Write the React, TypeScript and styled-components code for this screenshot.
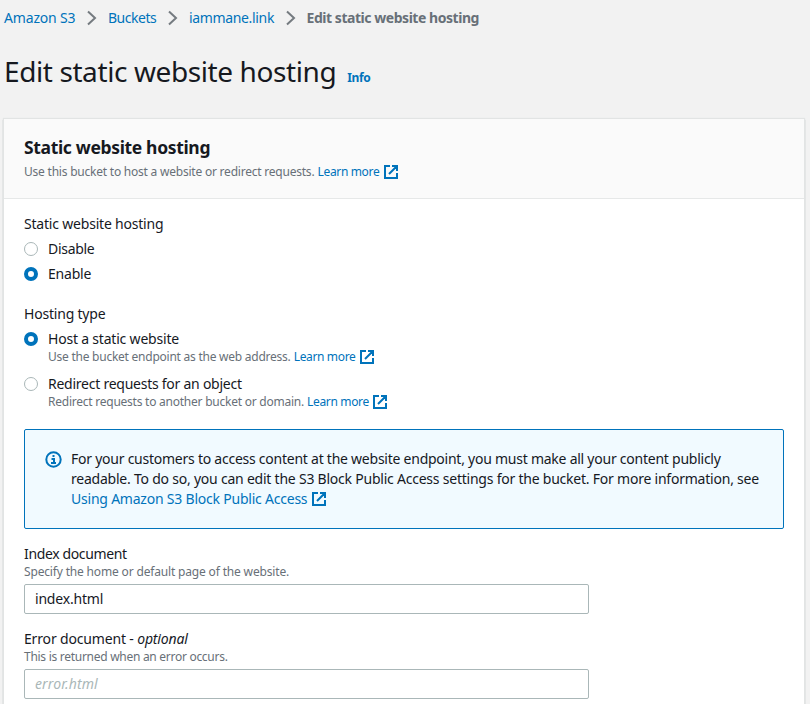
import React from "react";
import styled, { createGlobalStyle } from "styled-components";

const Global = createGlobalStyle`
  * { box-sizing: border-box; }
  html, body { margin: 0; background: #f2f2f2; }
  body { font: 14px/20px "Noto Sans", sans-serif; color: #16191f; overflow: hidden; }
`;
const Page = styled.main`
  width: 810px;
  height: 704px;
  overflow: hidden;
  padding: 8px 6px 0 4px;
`;
const Crumbs = styled.nav`display: flex; align-items: center; height: 20px; white-space: nowrap;`;
const Chevron = styled.svg`width: 10px; height: 16px; margin: 0 10.5px 0 12px; flex: none;`;
const Text = styled.span<{ $track?: number }>`
  letter-spacing: ${p => p.$track ?? -0.2}px;
  white-space: nowrap;
`;
const Link = styled.a<{ $track?: number }>`
  color: #0073bb;
  text-decoration: none;
  letter-spacing: ${p => p.$track ?? -0.2}px;
  white-space: nowrap;
`;
const Current = styled(Text)`color: #687078; font-weight: 700;`;
const Heading = styled.header`
  display: flex;
  align-items: baseline;
  gap: 11px;
  height: 36px;
  margin: 25px 0 30px;
`;
const Title = styled.h1`
  margin: 0;
  font-size: 28px;
  line-height: 36px;
  font-weight: 400;
  letter-spacing: -0.4px;
`;
const Info = styled(Link)`font-size: 12px; font-weight: 700;`;
const Card = styled.section`
  height: 640px;
  background: #fff;
  box-shadow: 0 0 1px 1px #e2e4e4, 1px 1px 1px 0 rgba(0, 28, 36, 0.3), -1px 1px 1px 0 rgba(0, 28, 36, 0.3);
`;
const CardHeader = styled.header`
  height: 80px;
  padding: 17px 20px 0;
  background: #fafafa;
  border-bottom: 1px solid #e6e8e8;
`;
const CardTitle = styled.h2`
  margin: 0;
  font-size: 17.5px;
  line-height: 22px;
  font-weight: 700;
  letter-spacing: -0.34px;
`;
const Hint = styled.div`
  display: flex;
  align-items: center;
  height: 16px;
  font-size: 12px;
  line-height: 16px;
  color: #687078;
  white-space: nowrap;
`;
const HeaderHint = styled(Hint)`margin-top: 6px;`;
const CardBody = styled.div`padding: 15px 20px 0;`;
const Label = styled.div`height: 20px; white-space: nowrap;`;
const Group = styled.div<{ $gap: number }>`margin-bottom: ${p => p.$gap}px;`;
const Choice = styled.div`
  display: grid;
  grid-template-columns: 14px 1fr;
  column-gap: 10px;
  align-items: center;
  margin-top: 5px;
  ${Hint} { grid-column: 2; }
`;
const DescribedChoice = styled(Choice)`grid-template-rows: 20px 16px; padding-bottom: 4px;`;
const Radio = styled.span<{ $on?: boolean }>`
  width: 14px;
  height: 14px;
  border-radius: 50%;
  background: #fff;
  border: ${p => (p.$on ? "4px solid #0073bb" : "1px solid #aab7b8")};
`;
const Alert = styled.div`
  display: flex;
  gap: 9px;
  height: 100px;
  margin-bottom: 15px;
  padding: 19px 20px;
  border: 1px solid #0073bb;
  border-radius: 2px;
  background: #f1faff;
`;
const InfoMark = styled.svg`width: 17px; height: 17px; margin-top: 1.5px; flex: none;`;
const AlertText = styled.div`display: flex; flex-direction: column;`;
const Line = styled.div`display: flex; align-items: center; height: 20px;`;
const Outer = styled.svg`width: 14px; height: 14px; margin-left: 5px; flex: none;`;
const LearnLink = styled(Link)`margin: 0 -0.7px 0 3.2px;`;
const Field = styled.label`display: block; width: 565px; margin-bottom: 15px;`;
const Input = styled.input<{ $track: number }>`
  display: block;
  width: 100%;
  height: 30px;
  margin-top: 4px;
  padding: 0 10px 2px;
  font: inherit;
  letter-spacing: ${p => p.$track}px;
  color: #16191f;
  background: #fff;
  border: 1px solid #aab7b8;
  border-radius: 2px;
  outline: none;
  &::placeholder { color: #aab7b8; font-style: italic; opacity: 1; }
`;

const Separator = () => (
  <Chevron viewBox="0 0 10 16" fill="none" stroke="#757b80" strokeWidth="2"><path d="M1 1.5 8 8 1 14.5" /></Chevron>
);
const External = () => (
  <Outer viewBox="0 0 14 14" fill="none" stroke="#0073bb" strokeWidth="2">
    <path d="M6 1H1V13H13V8M8 1H13V6M13 1 5 9" />
  </Outer>
);
const LearnMore = () => (
  <><LearnLink $track={-0.35}>Learn more</LearnLink><External /></>
);

export default function App() {
  return (
    <>
      <Global />
      <Page>
        <Crumbs>
          <Link $track={-0.17}>Amazon S3</Link><Separator />
          <Link $track={-0.45}>Buckets</Link><Separator />
          <Link $track={-0.33}>iammane.link</Link><Separator />
          <Current $track={-0.46}>Edit static website hosting</Current>
        </Crumbs>
        <Heading><Title>Edit static website hosting</Title><Info $track={-0.4}>Info</Info></Heading>
        <Card>
          <CardHeader>
            <CardTitle>Static website hosting</CardTitle>
            <HeaderHint><Text $track={-0.22}>Use this bucket to host a website or redirect requests.</Text><LearnMore /></HeaderHint>
          </CardHeader>
          <CardBody>
            <Group $gap={20}>
              <Label><Text>Static website hosting</Text></Label>
              <Choice><Radio /><Text $track={-0.3}>Disable</Text></Choice>
              <Choice><Radio $on /><Text>Enable</Text></Choice>
            </Group>
            <Group $gap={15}>
              <Label><Text>Hosting type</Text></Label>
              <DescribedChoice>
                <Radio $on /><Text>Host a static website</Text>
                <Hint><Text $track={-0.245}>Use the bucket endpoint as the web address.</Text><LearnMore /></Hint>
              </DescribedChoice>
              <DescribedChoice>
                <Radio /><Text $track={-0.25}>Redirect requests for an object</Text>
                <Hint><Text $track={-0.24}>Redirect requests to another bucket or domain.</Text><LearnMore /></Hint>
              </DescribedChoice>
            </Group>
            <Alert>
              <InfoMark viewBox="0 0 17 17" fill="none" stroke="#0073bb" strokeWidth="2">
                <circle cx="8.5" cy="8.5" r="7.2" />
                <path d="M7.5 5H9.5M6.5 8H9V12M6 12H11" />
              </InfoMark>
              <AlertText>
                <Line><Text $track={-0.245}>For your customers to access content at the website endpoint, you must make all your content publicly</Text></Line>
                <Line><Text $track={-0.225}>readable. To do so, you can edit the S3 Block Public Access settings for the bucket. For more information, see</Text></Line>
                <Line><Link $track={-0.22}>Using Amazon S3 Block Public Access</Link><External /></Line>
              </AlertText>
            </Alert>
            <Field>
              <Label><Text $track={-0.36}>Index document</Text></Label>
              <Hint><Text $track={-0.165}>Specify the home or default page of the website.</Text></Hint>
              <Input $track={-0.2} defaultValue="index.html" />
            </Field>
            <Field>
              <Label><Text $track={-0.16}>Error document - <i>optional</i></Text></Label>
              <Hint><Text $track={-0.28}>This is returned when an error occurs.</Text></Hint>
              <Input $track={0.1} placeholder="error.html" />
            </Field>
          </CardBody>
        </Card>
      </Page>
    </>
  );
}
